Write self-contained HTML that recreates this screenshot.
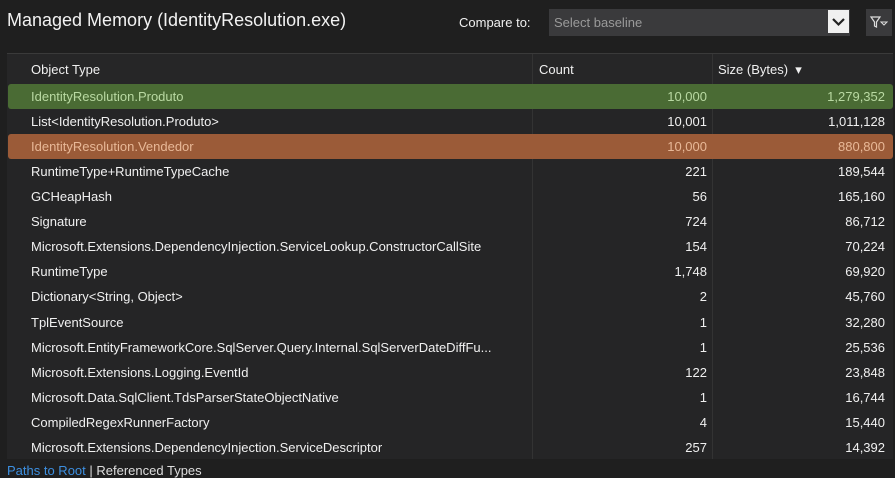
<!DOCTYPE html><html><head><style>
body{margin:0;width:895px;height:468px;background:#1f1f1f;font-family:"Liberation Sans",sans-serif;color:#f0f0f0;overflow:hidden;position:relative}
.t{position:absolute;left:7px;top:10px;font-size:18px;color:#f2f2f2}
.c{position:absolute;left:459px;top:15px;font-size:13px}
.dd{position:absolute;left:549px;top:9px;width:301px;height:27px;background:#3a3a3c}
.dd span{position:absolute;left:5px;top:6px;font-size:13px;color:#9a9a9a}
.ck{position:absolute;right:1px;top:1px;width:21px;height:23px;background:#f0f0f0}
.fb{position:absolute;left:866px;top:9px;width:26px;height:27px;background:#3a3a3c}
.tb{position:absolute;left:7px;top:53px;width:886px;height:405px;background:#252526;border-top:1px solid #3a3a3a}
.h{position:absolute;top:0;height:30px;width:100%;background:#262627}
.h div{position:absolute;top:8px;font-size:13px}
.vl{position:absolute;top:0;width:1px;height:405px;background:#333}
.r{position:absolute;left:1px;width:885px;height:25px;font-size:13px;border-radius:3px}
.r div{position:absolute;top:5px}
.a{left:23px}.b{right:186px}.d{right:8px}
.g{background:#4a6b34;color:#b9d9a2}.o{background:#9b5b38;color:#e8b897}
.ft{position:absolute;left:7px;top:463px;font-size:13px;color:#3d8fe0}
</style></head><body>
<div class="t">Managed Memory (IdentityResolution.exe)</div>
<div class="c">Compare to:</div>
<div class="dd"><span>Select baseline</span><div class="ck"><svg width="21" height="23"><path d="M5 9l5.5 5.5L16 9" stroke="#222" stroke-width="2.2" fill="none"/></svg></div></div>
<div class="fb"><svg width="26" height="27"><path d="M5 8h9l-3.5 5v5l-2-1v-4z" stroke="#ddd" stroke-width="1.2" fill="none"/><path d="M15 13h6l-3 3z" stroke="#ddd" fill="none"/></svg></div>
<div class="tb">
<div class="h"><div style="left:24px">Object Type</div><div style="left:532px">Count</div><div style="left:711px">Size (Bytes) &nbsp;▾</div></div>
<div class="vl" style="left:525px"></div><div class="vl" style="left:705px"></div>
<div class="r g" style="top:30px"><div class="a">IdentityResolution.Produto</div><div class="b">10,000</div><div class="d">1,279,352</div></div>
<div class="r" style="top:55px"><div class="a">List&lt;IdentityResolution.Produto&gt;</div><div class="b">10,001</div><div class="d">1,011,128</div></div>
<div class="r o" style="top:80px"><div class="a">IdentityResolution.Vendedor</div><div class="b">10,000</div><div class="d">880,800</div></div>
<div class="r" style="top:105px"><div class="a">RuntimeType+RuntimeTypeCache</div><div class="b">221</div><div class="d">189,544</div></div>
<div class="r" style="top:130px"><div class="a">GCHeapHash</div><div class="b">56</div><div class="d">165,160</div></div>
<div class="r" style="top:155px"><div class="a">Signature</div><div class="b">724</div><div class="d">86,712</div></div>
<div class="r" style="top:180px"><div class="a">Microsoft.Extensions.DependencyInjection.ServiceLookup.ConstructorCallSite</div><div class="b">154</div><div class="d">70,224</div></div>
<div class="r" style="top:205px"><div class="a">RuntimeType</div><div class="b">1,748</div><div class="d">69,920</div></div>
<div class="r" style="top:230px"><div class="a">Dictionary&lt;String, Object&gt;</div><div class="b">2</div><div class="d">45,760</div></div>
<div class="r" style="top:256px"><div class="a">TplEventSource</div><div class="b">1</div><div class="d">32,280</div></div>
<div class="r" style="top:281px"><div class="a">Microsoft.EntityFrameworkCore.SqlServer.Query.Internal.SqlServerDateDiffFu...</div><div class="b">1</div><div class="d">25,536</div></div>
<div class="r" style="top:306px"><div class="a">Microsoft.Extensions.Logging.EventId</div><div class="b">122</div><div class="d">23,848</div></div>
<div class="r" style="top:331px"><div class="a">Microsoft.Data.SqlClient.TdsParserStateObjectNative</div><div class="b">1</div><div class="d">16,744</div></div>
<div class="r" style="top:356px"><div class="a">CompiledRegexRunnerFactory</div><div class="b">4</div><div class="d">15,440</div></div>
<div class="r" style="top:381px;height:24px;overflow:hidden"><div class="a">Microsoft.Extensions.DependencyInjection.ServiceDescriptor</div><div class="b">257</div><div class="d">14,392</div></div>
</div>
<div class="ft">Paths to Root <span style="color:#ddd">| Referenced Types</span></div>
</body></html>
